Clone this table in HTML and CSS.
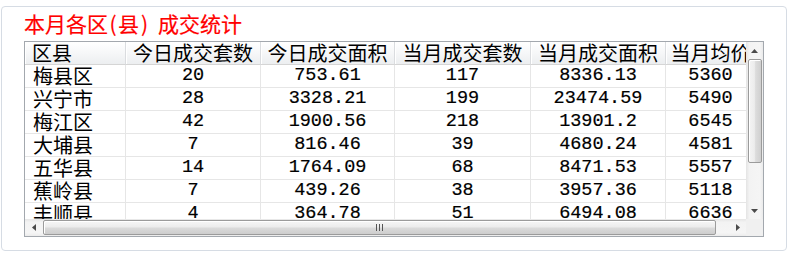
FILE: index.html
```html
<!DOCTYPE html>
<html lang="zh">
<head>
<meta charset="utf-8">
<title>本月各区(县)成交统计</title>
<link rel="stylesheet" href="styles.css">
</head>
<body>
<div class="card">
  <h2 class="title">本月各区<span class="pl">(</span>县<span class="pr">)</span>成交统计</h2>
  <div class="grid">
    <div class="main">
      <div class="viewport">
        <table class="data">
          <colgroup>
            <col class="c1"><col class="c2"><col class="c3"><col class="c4"><col class="c5"><col class="c6">
          </colgroup>
          <thead>
            <tr><th class="left">区县</th><th>今日成交套数</th><th>今日成交面积</th><th>当月成交套数</th><th>当月成交面积</th><th>当月均价</th></tr>
          </thead>
          <tbody>
            <tr><td class="left">梅县区</td><td class="num">20</td><td class="num">753.61</td><td class="num">117</td><td class="num">8336.13</td><td class="num">5360</td></tr>
            <tr><td class="left">兴宁市</td><td class="num">28</td><td class="num">3328.21</td><td class="num">199</td><td class="num">23474.59</td><td class="num">5490</td></tr>
            <tr><td class="left">梅江区</td><td class="num">42</td><td class="num">1900.56</td><td class="num">218</td><td class="num">13901.2</td><td class="num">6545</td></tr>
            <tr><td class="left">大埔县</td><td class="num">7</td><td class="num">816.46</td><td class="num">39</td><td class="num">4680.24</td><td class="num">4581</td></tr>
            <tr><td class="left">五华县</td><td class="num">14</td><td class="num">1764.09</td><td class="num">68</td><td class="num">8471.53</td><td class="num">5557</td></tr>
            <tr><td class="left">蕉岭县</td><td class="num">7</td><td class="num">439.26</td><td class="num">38</td><td class="num">3957.36</td><td class="num">5118</td></tr>
            <tr><td class="left">丰顺县</td><td class="num">4</td><td class="num">364.78</td><td class="num">51</td><td class="num">6494.08</td><td class="num">6636</td></tr>
          </tbody>
        </table>
      </div>
      <div class="vbar">
        <div class="btn"><svg width="7" height="4" viewBox="0 0 7 4"><polygon points="0,4 7,4 3.5,0" fill="#4a4a4a"/></svg></div>
        <div class="vtrack"><div class="vthumb"></div></div>
        <div class="btn"><svg width="7" height="4" viewBox="0 0 7 4"><polygon points="0,0 7,0 3.5,4" fill="#4a4a4a"/></svg></div>
      </div>
    </div>
    <div class="bottom">
      <div class="hbar">
        <div class="btn"><svg width="4" height="7" viewBox="0 0 4 7"><polygon points="4,0 4,7 0,3.5" fill="#4a4a4a"/></svg></div>
        <div class="htrack">
          <div class="hthumb">
            <svg class="grip" width="7" height="7" viewBox="0 0 7 7"><rect x="0" y="0" width="1" height="7" fill="#555"/><rect x="3" y="0" width="1" height="7" fill="#555"/><rect x="6" y="0" width="1" height="7" fill="#555"/></svg>
          </div>
        </div>
        <div class="btn"><svg width="4" height="7" viewBox="0 0 4 7"><polygon points="0,0 0,7 4,3.5" fill="#4a4a4a"/></svg></div>
      </div>
      <div class="corner"></div>
    </div>
  </div>
</div>
</body>
</html>
```
FILE: styles.css
```css
html, body {
  margin: 0;
  padding: 0;
  background: #ffffff;
}

.card {
  box-sizing: border-box;
  margin: 6px 0 0 1px;
  width: 786px;
  height: 245px;
  border: 1px solid #d6dce4;
  border-radius: 4px;
  padding: 3px 0 0 22px;
  background: #ffffff;
}

.title {
  margin: 0 0 5px 0;
  height: 26px;
  font-family: "Noto Sans CJK SC", sans-serif;
  font-size: 21px;
  line-height: 26px;
  font-weight: normal;
  color: #ff0000;
  white-space: nowrap;
  -webkit-text-stroke: 0.2px #ff0000;
}

.pl {
  display: inline-block;
  width: 10px;
  text-align: center;
}

.pr {
  display: inline-block;
  width: 19px;
  text-align: left;
  padding-left: 2px;
  box-sizing: border-box;
}

.grid {
  box-sizing: border-box;
  width: 740px;
  height: 196px;
  border: 1px solid #a3a8ae;
  display: flex;
  flex-direction: column;
}

.main {
  display: flex;
  height: 177px;
}

.viewport {
  width: 721px;
  height: 177px;
  overflow: hidden;
  background: #ffffff;
}

.data {
  table-layout: fixed;
  border-collapse: separate;
  border-spacing: 0;
  width: 731px;
  font-family: "Noto Sans CJK SC", sans-serif;
  font-size: 20px;
  color: #000000;
}

.c1 { width: 101px; }
.c2 { width: 135px; }
.c3 { width: 134px; }
.c4 { width: 136px; }
.c5 { width: 135px; }
.c6 { width: 90px; }

.data th,
.data td {
  box-sizing: border-box;
  padding: 0;
  height: 23px;
  line-height: 22px;
  text-align: center;
  white-space: nowrap;
  font-weight: normal;
}

.data th {
  background: linear-gradient(to bottom, #ffffff 0%, #f7f8f9 45%, #eceef0 100%);
  border-right: 1px solid #dadcdf;
  border-bottom: 1px solid #d5d5d5;
  box-shadow: inset 1px 0 0 #ffffff;
}

.data td {
  border-right: 1px solid #e6e6e6;
  border-bottom: 1px solid #e6e6e6;
}

.data .left {
  text-align: left;
  padding-left: 7px;
}

.data td.left {
  padding-left: 8px;
}

.data .num {
  font-family: "Liberation Mono", monospace;
  font-size: 18.5px;
  -webkit-text-stroke: 0.2px #000000;
}

.vbar {
  width: 17px;
  height: 177px;
  display: flex;
  flex-direction: column;
  background: linear-gradient(to right, #e4e4e4 0%, #f3f3f3 20%, #f5f5f5 80%, #ebebeb 100%);
}

.btn {
  width: 17px;
  height: 17px;
  flex: none;
  display: flex;
  align-items: center;
  justify-content: center;
}

.vtrack {
  flex: 1;
  display: flex;
  flex-direction: column;
}

.vthumb {
  box-sizing: border-box;
  margin-left: 2px;
  width: 14px;
  height: 104px;
  border: 1px solid #9b9b9b;
  border-radius: 2px;
  background: linear-gradient(to right, #f4f4f4 0%, #ececec 45%, #dcdcdc 55%, #cfcfcf 100%);
  box-shadow: inset 1px 1px 0 #ffffff;
}

.bottom {
  display: flex;
  height: 17px;
}

.hbar {
  width: 721px;
  height: 17px;
  display: flex;
  background: linear-gradient(to bottom, #e6e6e6 0%, #f3f3f3 20%, #f5f5f5 80%, #ececec 100%);
}

.htrack {
  flex: 1;
  display: flex;
  align-items: center;
}

.hthumb {
  box-sizing: border-box;
  margin-left: 1px;
  width: 673px;
  height: 15px;
  border: 1px solid #9b9b9b;
  border-radius: 2px;
  background: linear-gradient(to bottom, #f6f6f6 0%, #ececec 45%, #dadada 55%, #cdcdcd 100%);
  box-shadow: inset 1px 1px 0 #ffffff;
  display: flex;
  align-items: center;
  justify-content: center;
}

.grip {
  display: block;
}

.corner {
  width: 17px;
  height: 17px;
  background: #f0f0f0;
}
```
